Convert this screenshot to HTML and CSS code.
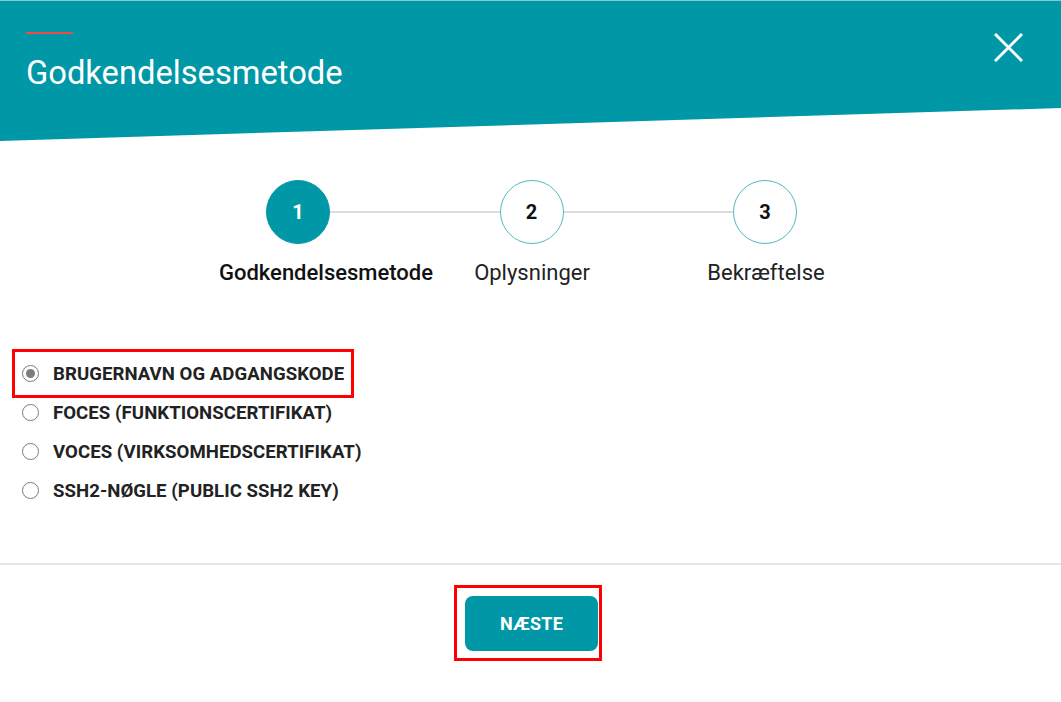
FILE: index.html
```html
<!DOCTYPE html>
<html lang="da">
<head>
<meta charset="utf-8">
<title>Godkendelsesmetode</title>
<link rel="stylesheet" href="styles.css">
</head>
<body>
<div class="dialog">
  <header class="dialog-header">
    <div class="title-block">
      <span class="accent"></span>
      <h1 class="title">Godkendelsesmetode</h1>
    </div>
    <button class="close" aria-label="Luk">
      <svg width="29" height="29" viewBox="0 0 29 29"><path d="M1 1L28 28M28 1L1 28" stroke="#fff" stroke-width="3" fill="none"/></svg>
    </button>
  </header>

  <section class="stepper">
    <div class="circles">
      <span class="step active">1</span>
      <span class="line"></span>
      <span class="step">2</span>
      <span class="line"></span>
      <span class="step">3</span>
    </div>
    <div class="labels">
      <span class="label current">Godkendelsesmetode</span>
      <span class="label">Oplysninger</span>
      <span class="label">Bekræftelse</span>
    </div>
  </section>

  <section class="options">
    <label class="option highlight"><span class="radio checked"></span><span class="opt-text">BRUGERNAVN OG ADGANGSKODE</span></label>
    <label class="option"><span class="radio"></span><span class="opt-text">FOCES (FUNKTIONSCERTIFIKAT)</span></label>
    <label class="option"><span class="radio"></span><span class="opt-text">VOCES (VIRKSOMHEDSCERTIFIKAT)</span></label>
    <label class="option"><span class="radio"></span><span class="opt-text">SSH2-NØGLE (PUBLIC SSH2 KEY)</span></label>
  </section>

  <footer class="dialog-footer">
    <span class="btn-frame"><button class="next">NÆSTE</button></span>
  </footer>
</div>
</body>
</html>
```
FILE: styles.css
```css
* { box-sizing: border-box; }
html, body { margin: 0; padding: 0; background: #fff; }
body { font-family: Roboto, "Liberation Sans", Arial, sans-serif; color: #1a1a1a; }

.dialog { width: 1061px; height: 702px; overflow: hidden; }

.dialog-header {
  height: 141px;
  background: #0097a7;
  border-top: 1px solid #7fcbd3;
  clip-path: polygon(0 0, 100% 0, 100% 108px, 0 141px);
  display: flex;
  justify-content: space-between;
  align-items: flex-start;
  padding: 31px 38px 0 26px;
}
.title-block { display: flex; flex-direction: column; }
.accent { display: block; width: 47px; height: 2px; background: #ef4b46; }
.title {
  margin: 19px 0 0;
  font-size: 32.7px;
  font-weight: 400;
  line-height: 40px;
  color: #fff;
}
.close {
  margin-top: 1px;
  padding: 0;
  border: 0;
  background: transparent;
  width: 29px;
  height: 29px;
  display: flex;
}

.stepper { margin-top: 39px; }
.circles { display: flex; align-items: center; margin-left: 266px; width: 531px; }
.step {
  width: 64px; height: 64px; flex: none;
  border-radius: 50%;
  border: 1.5px solid #52b8c2;
  display: flex; align-items: center; justify-content: center;
  font-size: 20px; font-weight: 700; color: #111;
}
.step.active { background: #0097a7; border-color: #0097a7; color: #fff; }
.line { flex: 1; height: 2px; background: #dcdcdc; }

.labels { display: grid; grid-template-columns: 178px 234px 234px; margin-left: 237px; margin-top: 16px; }
.label { display: flex; justify-content: center; font-size: 22px; line-height: 26px; color: #222; white-space: nowrap; }
.label.current { font-weight: 500; color: #111; }

.options { margin-top: 68px; display: flex; flex-direction: column; align-items: flex-start; padding-left: 17px; }
.option {
  display: flex; align-items: center;
  height: 39px;
  padding: 0 5px 0 5px;
}
.highlight { outline: 3px solid #ff0000; outline-offset: 2px; }
.radio {
  width: 17px; height: 17px; flex: none;
  border-radius: 50%;
  border: 1.5px solid #7a7a7a;
  display: flex; align-items: center; justify-content: center;
  margin-right: 14px;
}
.radio.checked::after { content: ""; width: 9px; height: 9px; border-radius: 50%; background: #7d7d7d; }
.opt-text { font-size: 18.6px; font-weight: 700; color: #222; letter-spacing: 0.05px; }

.dialog-footer { margin-top: 53px; border-top: 2px solid #e6e6e6; display: flex; justify-content: center; padding-top: 20px; }
.btn-frame { border: 3px solid #ff0000; padding: 8px 1px 7px 8px; margin-right: 5px; display: inline-flex; }
.next {
  width: 133px; height: 55px;
  border: 0; border-radius: 8px;
  background: #0097a7; color: #fff;
  font-family: Roboto, "Liberation Sans", Arial, sans-serif;
  font-size: 18px; font-weight: 700;
  letter-spacing: 0.2px;
}
```
